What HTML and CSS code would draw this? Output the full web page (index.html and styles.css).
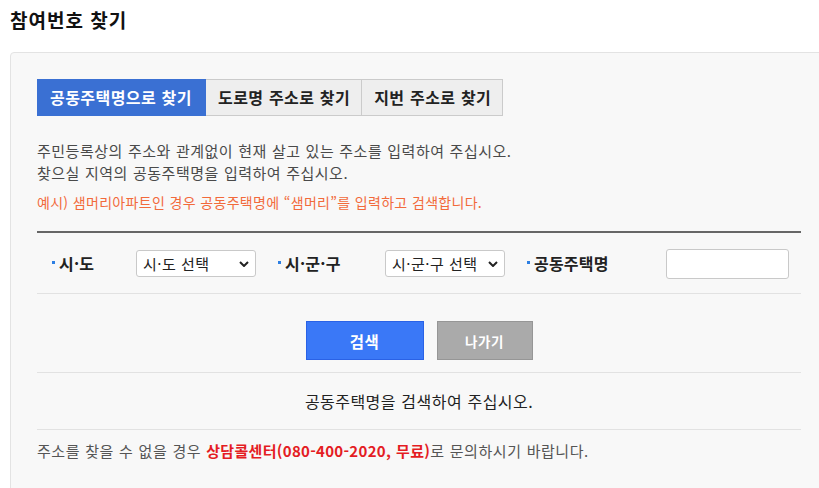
FILE: index.html
```html
<!DOCTYPE html>
<html lang="ko">
<head>
<meta charset="utf-8">
<title>참여번호 찾기</title>
<link rel="stylesheet" href="styles.css">
</head>
<body>
<h1 class="page-title">참여번호 찾기</h1>
<div class="panel">
  <ul class="tabs">
    <li class="tab is-active">공동주택명으로 찾기</li>
    <li class="tab">도로명 주소로 찾기</li>
    <li class="tab">지번 주소로 찾기</li>
  </ul>
  <div class="guide">
    <p class="guide-line">주민등록상의 주소와 관계없이 현재 살고 있는 주소를 입력하여 주십시오.</p>
    <p class="guide-line">찾으실 지역의 공동주택명을 입력하여 주십시오.</p>
    <p class="guide-example">예시) 샘머리아파트인 경우 공동주택명에 “샘머리”를 입력하고 검색합니다.</p>
  </div>
  <div class="search-form">
    <div class="field-label">시·도</div>
    <div class="field">
      <div class="select-wrap">
        <select class="select"><option>시·도 선택</option></select>
        <svg class="chevron" width="10" height="6" viewBox="0 0 10 6"><path d="M1 1l4 4 4-4" fill="none" stroke="#222" stroke-width="2"/></svg>
      </div>
    </div>
    <div class="field-label">시·군·구</div>
    <div class="field">
      <div class="select-wrap">
        <select class="select"><option>시·군·구 선택</option></select>
        <svg class="chevron" width="10" height="6" viewBox="0 0 10 6"><path d="M1 1l4 4 4-4" fill="none" stroke="#222" stroke-width="2"/></svg>
      </div>
    </div>
    <div class="field-label">공동주택명</div>
    <div class="field">
      <input class="text-input" type="text">
    </div>
  </div>
  <div class="actions">
    <button class="btn btn-primary" type="button">검색</button>
    <button class="btn btn-secondary" type="button">나가기</button>
  </div>
  <div class="result">공동주택명을 검색하여 주십시오.</div>
  <p class="help">주소를 찾을 수 없을 경우 <strong class="help-strong">상담콜센터(080-400-2020, 무료)</strong>로 문의하시기 바랍니다.</p>
</div>
</body>
</html>
```

FILE: styles.css
```css
html, body {
  margin: 0;
  padding: 0;
  background: #ffffff;
  overflow: hidden;
}

body {
  font-family: "Noto Sans CJK KR", "Noto Sans", sans-serif;
  color: #222;
  width: 819px;
  height: 488px;
}

.page-title {
  margin: 0;
  height: 52px;
  padding: 0 10px;
  box-sizing: border-box;
  font-size: 19px;
  font-weight: 700;
  line-height: 40px;
  letter-spacing: 1px;
  color: #111;
}

.panel {
  margin-left: 10px;
  width: 818px;
  box-sizing: border-box;
  border: 1px solid #e3e3e3;
  border-radius: 4px;
  background: #f8f8f8;
  padding: 26px 26px 40px;
}

.tabs {
  list-style: none;
  margin: 0;
  padding: 0;
  display: flex;
}

.tab {
  height: 37px;
  box-sizing: border-box;
  padding: 0 11px 0 12px;
  border: 1px solid #cbcbcb;
  border-left: none;
  background: #eeeeee;
  font-size: 16px;
  font-weight: 700;
  line-height: 35px;
  letter-spacing: 0.45px;
  word-spacing: 0.5px;
  color: #222;
}

.tab.is-active {
  border-color: #3a70d3;
  background: #3a70d3;
  color: #ffffff;
  padding: 0 13px 0 13px;
}

.guide {
  margin-top: 24px;
}

.guide-line {
  margin: 0;
  font-size: 15px;
  line-height: 22px;
  letter-spacing: 0.5px;
  word-spacing: 0.4px;
  color: #4a4a4a;
}

.guide-example {
  margin: 7px 0 0;
  font-size: 14px;
  line-height: 22px;
  letter-spacing: 0.3px;
  word-spacing: 0.2px;
  color: #f26a3b;
}

.search-form {
  margin-top: 18px;
  border-top: 2px solid #666666;
  border-bottom: 1px solid #e2e2e2;
  height: 63px;
  box-sizing: border-box;
  display: grid;
  grid-template-columns: 99px 127px 122px 127px 154px 1fr;
  align-items: center;
}

.field-label {
  padding-left: 15px;
  font-size: 16px;
  font-weight: 700;
  line-height: 22px;
  letter-spacing: 0.2px;
  color: #222;
  display: flex;
  align-items: center;
}

.field-label::before {
  content: "";
  width: 3px;
  height: 3px;
  background: #2d7fe3;
  margin-right: 4px;
  margin-top: -2px;
}

.field {
  display: flex;
  align-items: center;
}

.select-wrap {
  position: relative;
  width: 120px;
  height: 27px;
}

.select {
  appearance: none;
  -webkit-appearance: none;
  width: 120px;
  height: 27px;
  box-sizing: border-box;
  border: 1px solid #c9c9c9;
  border-radius: 3px;
  background: #ffffff;
  padding: 0 0 0 6px;
  margin: 0;
  font-family: "Noto Sans CJK KR", sans-serif;
  font-size: 15px;
  letter-spacing: 0.5px;
  color: #222;
}

.chevron {
  position: absolute;
  right: 7px;
  top: 11px;
  pointer-events: none;
}

.text-input {
  width: 123px;
  height: 30px;
  box-sizing: border-box;
  border: 1px solid #c9c9c9;
  border-radius: 3px;
  background: #ffffff;
  margin: 1px 0 0;
  padding: 0 6px;
}

.actions {
  display: flex;
  justify-content: center;
  gap: 13px;
  padding: 27px 0 12px;
  border-bottom: 1px solid #e2e2e2;
}

.btn {
  height: 39px;
  box-sizing: border-box;
  font-family: "Noto Sans CJK KR", sans-serif;
  font-weight: 700;
  color: #ffffff;
  border-radius: 0;
  margin: 0;
  padding: 0;
  cursor: pointer;
}

.btn-primary {
  width: 118px;
  background: #3a78f7;
  border: 1px solid #2a62e6;
  font-size: 15.5px;
  letter-spacing: 0.6px;
}

.btn-secondary {
  width: 96px;
  background: #aaaaaa;
  border: 1px solid #969696;
  font-size: 13.5px;
  letter-spacing: 0.5px;
}

.result {
  height: 56px;
  border-bottom: 1px solid #e2e2e2;
  display: flex;
  align-items: center;
  justify-content: center;
  font-size: 16px;
  letter-spacing: 0.45px;
  word-spacing: 0.5px;
  color: #222;
}

.help {
  margin: 10px 0 0;
  font-size: 15px;
  line-height: 22px;
  letter-spacing: 0.55px;
  word-spacing: 0.4px;
  color: #555;
}

.help-strong {
  color: #e41c23;
  font-weight: 700;
  letter-spacing: 0.3px;
}
```
